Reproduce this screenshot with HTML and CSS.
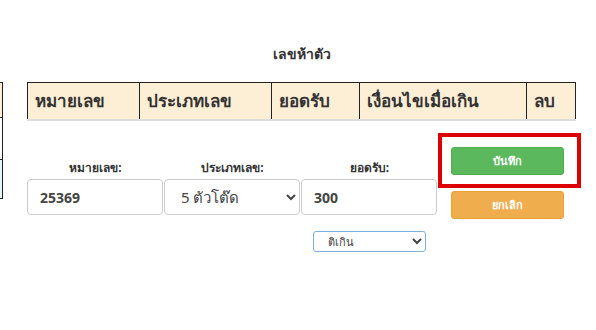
FILE: index.html
```html
<!DOCTYPE html>
<html lang="th">
<head>
  <meta charset="UTF-8" />
  <meta name="viewport" content="width=device-width, initial-scale=1.0"/>
  <title>เลขห้าตัว</title>
  <link rel="stylesheet" href="styles.css">
</head>
<body>
  <div class="page">
    <h3 class="hua">เลขห้าตัว</h3>

    <div class="rao">
      <div class="tua-kao">
        <div class="kao-hua"></div>
        <div class="kao-khao"></div>
        <div class="kao-fa"></div>
      </div>

      <table class="tarang">
        <thead>
          <tr>
            <th class="c1">หมายเลข</th>
            <th class="c2">ประเภทเลข</th>
            <th class="c3">ยอดรับ</th>
            <th class="c4">เงื่อนไขเมื่อเกิน</th>
            <th class="c5">ลบ</th>
          </tr>
        </thead>
      </table>
    </div>

    <div class="form">
      <div class="khlum">
        <label class="pai">หมายเลข:</label>
        <input class="chong num" type="text" value="25369">
      </div>
      <div class="khlum">
        <label class="pai">ประเภทเลข:</label>
        <select class="chong">
          <option>5 ตัวโต๊ด</option>
        </select>
      </div>
      <div class="khlum">
        <label class="pai">ยอดรับ:</label>
        <input class="chong num" type="text" value="300">
        <select class="lek">
          <option>ติเกิน</option>
        </select>
      </div>
      <div class="pum">
        <button class="btn khiao">บันทึก</button>
        <button class="btn som">ยกเลิก</button>
        <div class="krop"></div>
      </div>
    </div>
  </div>
</body>
</html>
```

FILE: styles.css
```css
* {
  margin: 0;
  padding: 0;
  box-sizing: border-box;
  font-family: Tahoma, 'Noto Sans', 'DejaVu Sans', sans-serif;
}

body {
  background: #fff;
  color: #333;
}

.page {
  width: 596px;
  height: 330px;
  position: relative;
}

.hua {
  text-align: center;
  font-size: 14px;
  font-weight: bold;
  color: #333;
  padding-top: 43px;
  height: 82px;
  padding-left: 8px;
}

.rao {
  display: flex;
  align-items: flex-start;
  height: 38px;
}

.tua-kao {
  width: 3px;
  border-right: 1px solid #222;
  border-top: 1px solid #222;
  margin-right: 24px;
}

.kao-hua {
  height: 35px;
  background: #fdeed6;
  border-bottom: 1px solid #222;
}

.kao-khao {
  height: 42px;
  background: #fff;
  border-bottom: 1px solid #222;
}

.kao-fa {
  height: 39px;
  background: #e6f5f5;
  border-bottom: 1px solid #222;
}

.tarang {
  border-collapse: collapse;
  width: 549px;
}

.tarang th {
  background: #fdeed6;
  border: 1px solid #222;
  border-bottom: 2px solid #ddd;
  height: 37px;
  text-align: left;
  padding: 0 7px;
  font-size: 17px;
  font-weight: bold;
  color: #333;
}

.c1 { width: 112px; }
.c2 { width: 132px; }
.c3 { width: 89px; }
.c4 { width: 167px; }
.c5 { width: 49px; }

.form {
  display: flex;
  padding-left: 27px;
}

.khlum {
  width: 137px;
  display: flex;
  flex-direction: column;
  align-items: center;
}

.pai {
  font-size: 12px;
  font-weight: bold;
  color: #333;
  margin-top: 38px;
  margin-bottom: 5px;
  height: 16px;
}

.chong {
  width: 136px;
  height: 36px;
  border: 1px solid #ccc;
  border-radius: 4px;
  padding: 0 12px;
  font-size: 15px;
  color: #444;
  background: #fff;
  align-self: flex-start;
}

.num {
  font-weight: bold;
  font-size: 14px;
}

.lek {
  margin-top: 16px;
  width: 113px;
  height: 21px;
  border: 1px solid #7fb0e0;
  border-radius: 3px;
  font-size: 11px;
  padding-left: 10px;
  color: #444;
  background: #fff;
}

.pum {
  margin-left: 13px;
  margin-top: 27px;
  display: flex;
  flex-direction: column;
  gap: 16px;
  position: relative;
}

.btn {
  width: 113px;
  height: 28px;
  border: 1px solid transparent;
  border-radius: 3px;
  color: #fff;
  font-size: 11px;
  font-weight: bold;
  cursor: pointer;
}

.khiao {
  background: #5cb85c;
  border-color: #4cae4c;
}

.som {
  background: #f0ad4e;
  border-color: #eea236;
}

.krop {
  position: absolute;
  left: -13px;
  top: -14px;
  width: 143px;
  height: 55px;
  border: 4px solid #dd0000;
}
```
